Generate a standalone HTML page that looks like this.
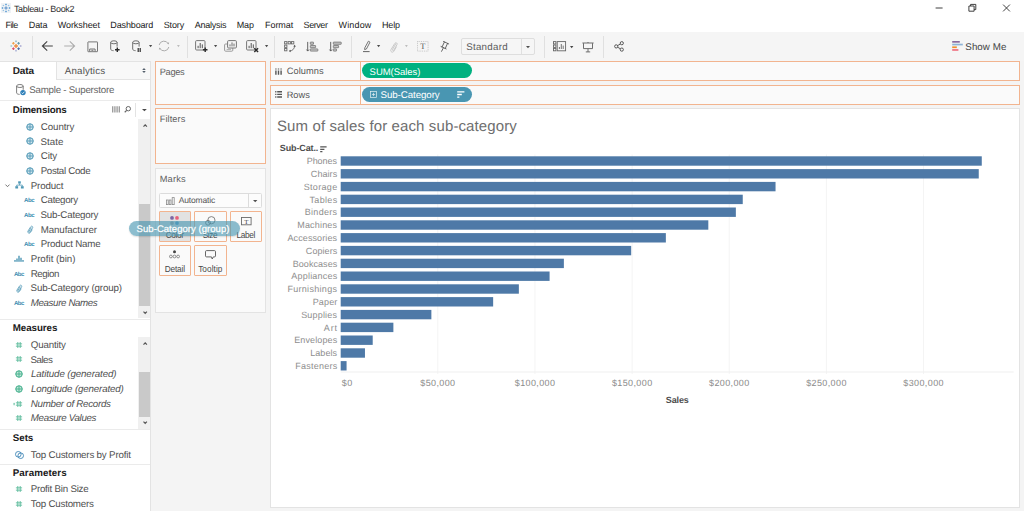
<!DOCTYPE html>
<html lang="en">
<head>
<meta charset="utf-8">
<title>Tableau - Book2</title>
<meta name="viewport" content="width=1024, initial-scale=1">
<style>
html,body{margin:0;padding:0}
body{width:1024px;height:511px;overflow:hidden;background:#fff;font-family:"Liberation Sans", sans-serif;font-size:9px;line-height:12px;color:#333;text-rendering:geometricPrecision}
#app,#app div,#app section,#app aside,#app header,#app nav,#app main,#app ul,#app li,#app button{position:absolute;box-sizing:border-box;margin:0;padding:0;list-style:none}
#app{overflow:hidden;background:#fff}
button{font:inherit;color:inherit;appearance:none;-webkit-appearance:none}
.t{position:absolute;white-space:nowrap;line-height:12px}
.ic{position:absolute;overflow:visible}
.pill{border-radius:8px}
.gt{-webkit-text-stroke:0.3px rgba(255,255,255,.85)}
</style>
</head>
<body>
<div id="app" style="left:0px;top:0px;width:1024px;height:511px;">
 <header id="titlebar" style="left:0px;top:0px;width:1024px;height:17px;">
  <svg class="ic" style="left:1px;top:3px" width="10" height="10" viewBox="0 0 10 10" ><rect width="10" height="10" fill="#f0f3f6"/><g stroke="#4a86c5" stroke-width="0.9" fill="none"><path d="M5 3.3v3.4M3.3 5h3.4"/><path d="M5 0.6v1.8M4.1 1.5h1.8M5 7.6v1.8M4.1 8.5h1.8M1.5 4.1v1.8M0.6 5h1.8M8.5 4.1v1.8M7.6 5h1.8" stroke="#6aa5d6"/><path d="M2.4 1.8v1.4M1.7 2.5h1.4M7.6 1.8v1.4M6.9 2.5h1.4M2.4 6.8v1.4M1.7 7.5h1.4M7.6 6.8v1.4M6.9 7.5h1.4" stroke="#8bbbe0" stroke-width="0.7"/></g></svg>
  <span class="t" style="left:13.94px;top:3px;color:#2e2e2e;letter-spacing:-0.32px">Tableau - Book2</span>
  <svg class="ic" style="left:932px;top:0px" width="84" height="17" viewBox="0 0 84 17" ><g fill="none" stroke="#2b2b2b" stroke-width="0.9"><path d="M3.6 8h7"/><path d="M36.9 6h5.2v5.2h-5.2zM38.6 6v-1.6h5.2v5.2h-1.7"/><path d="M71.1 4.6l6.8 6.8M77.9 4.6l-6.8 6.8"/></g></svg>
 </header>
 <nav id="menubar" style="left:0px;top:17px;width:1024px;height:15px;">
  <span class="t" style="left:5.49px;top:2px;color:#1a1a1a;letter-spacing:-0.57px">File</span>
  <span class="t" style="left:28.82px;top:2px;color:#1a1a1a;letter-spacing:-0.1px">Data</span>
  <span class="t" style="left:57.69px;top:2px;color:#1a1a1a;letter-spacing:-0.06px">Worksheet</span>
  <span class="t" style="left:110.32px;top:2px;color:#1a1a1a;letter-spacing:-0.14px">Dashboard</span>
  <span class="t" style="left:163.75px;top:2px;color:#1a1a1a;letter-spacing:-0.13px">Story</span>
  <span class="t" style="left:194.79px;top:2px;color:#1a1a1a;letter-spacing:-0.27px">Analysis</span>
  <span class="t" style="left:236.72px;top:2px;color:#1a1a1a;letter-spacing:-0.1px">Map</span>
  <span class="t" style="left:265.09px;top:2px;color:#1a1a1a;letter-spacing:-0.08px">Format</span>
  <span class="t" style="left:303.55px;top:2px;color:#1a1a1a;letter-spacing:-0.42px">Server</span>
  <span class="t" style="left:338.49px;top:2px;color:#1a1a1a;letter-spacing:0.16px">Window</span>
  <span class="t" style="left:381.89px;top:2px;color:#1a1a1a;letter-spacing:-0.12px">Help</span>
 </nav>
 <div id="toolbar" style="left:0px;top:32px;width:1024px;height:29px;background:#f5f5f5">
  <div style="left:32.3px;top:3.5px;width:1px;height:22px;background:#e0e0e0">
  </div>
  <div style="left:187px;top:3.5px;width:1px;height:22px;background:#e0e0e0">
  </div>
  <div style="left:274.3px;top:3.5px;width:1px;height:22px;background:#e0e0e0">
  </div>
  <div style="left:351px;top:3.5px;width:1px;height:22px;background:#e0e0e0">
  </div>
  <div style="left:544.1px;top:3.5px;width:1px;height:22px;background:#e0e0e0">
  </div>
  <div style="left:603px;top:3.5px;width:1px;height:22px;background:#e0e0e0">
  </div>
  <svg class="ic" style="left:10px;top:8.2px" width="12" height="12" viewBox="0 0 12 12" ><g fill="none"><path d="M6 4.1v3.8M4.1 6h3.8" stroke="#ee8a3c" stroke-width="1.3"/><path d="M3.4 2v2.6M2.1 3.3h2.6" stroke="#f0a04b" stroke-width="1"/><path d="M8.6 2v2.6M7.3 3.3h2.6" stroke="#5f97ab" stroke-width="1"/><path d="M3.4 7.4v2.6M2.1 8.7h2.6" stroke="#d9486a" stroke-width="1"/><path d="M8.6 7.4v2.6M7.3 8.7h2.6" stroke="#4a6aa5" stroke-width="1"/><path d="M6 0.4v1.8M5.1 1.3h1.8" stroke="#86b9c6" stroke-width="0.8"/><path d="M6 9.8v1.8M5.1 10.7h1.8" stroke="#a7aed6" stroke-width="0.8"/><path d="M1.3 5.1v1.8M0.4 6h1.8" stroke="#9cc8d2" stroke-width="0.8"/><path d="M10.7 5.1v1.8M9.8 6h1.8" stroke="#a3a4d2" stroke-width="0.8"/></g></svg>
  <svg class="ic" style="left:41px;top:8.3px" width="13" height="12" viewBox="0 0 13 12" ><path d="M6.2 1.3L1.4 6l4.8 4.7M1.6 6h10.2" fill="none" stroke="#444" stroke-width="1.15"/></svg>
  <svg class="ic" style="left:63.3px;top:8.3px" width="13" height="12" viewBox="0 0 13 12" ><path d="M6.8 1.3L11.6 6l-4.8 4.7M11.4 6H1.2" fill="none" stroke="#adadad" stroke-width="1.1"/></svg>
  <svg class="ic" style="left:86.5px;top:8.5px" width="11" height="11" viewBox="0 0 11 11" ><g fill="none" stroke="#777" stroke-width="1"><rect x="0.9" y="0.9" width="9.6" height="9.8" rx="0.3"/></g><path d="M2.7 10.3V8h5.4v2.3" fill="none" stroke="#666" stroke-width="0.9"/><path d="M4.4 9.3h2" stroke="#666" stroke-width="0.9"/></svg>
  <svg class="ic" style="left:109.6px;top:8.3px" width="12" height="13" viewBox="0 0 12 13" ><g fill="none" stroke="#6e6e6e" stroke-width="1"><ellipse cx="3.9" cy="2.3" rx="3.2" ry="1.5"/><path d="M0.7 2.3v6.9c0 .800 1.3 1.4 2.9 1.5"/><path d="M7.1 2.3v4.3"/></g><path d="M7.3 7.4v4.6M5 9.7h4.6" stroke="#2b2b2b" stroke-width="1.4" fill="none"/></svg>
  <svg class="ic" style="left:131.8px;top:8.3px" width="12" height="13" viewBox="0 0 12 13" ><g fill="none" stroke="#6e6e6e" stroke-width="1"><ellipse cx="3.9" cy="2.3" rx="3.2" ry="1.5"/><path d="M0.7 2.3v6.9c0 .800 1.3 1.4 2.9 1.5"/><path d="M7.1 2.3v4.3"/></g><path d="M6.2 8v4M8.2 8v4" stroke="#2b2b2b" stroke-width="1.2" fill="none"/></svg>
  <svg class="ic" style="left:149.1px;top:13.4px" width="3.2" height="2.2" viewBox="0 0 3.2 2.2" ><path d="M0 0h3.2l-1.6 2.2z" fill="#4a4a4a"/></svg>
  <svg class="ic" style="left:158.3px;top:8.3px" width="12" height="12" viewBox="0 0 12 12" ><g fill="none" stroke="#adadad" stroke-width="1"><path d="M1.15 5A4.9 4.9 0 0 1 10.3 3.8M10.85 7A4.9 4.9 0 0 1 1.7 8.2"/></g><path d="M9 3.2l1.9 1.4.2-2.3zM3 8.8L1.1 7.4l-.2 2.3z" fill="#adadad"/></svg>
  <svg class="ic" style="left:176.8px;top:13.4px" width="2.8" height="2.2" viewBox="0 0 2.8 2.2" ><path d="M0 0h2.8l-1.4 2.2z" fill="#bdbdbd"/></svg>
  <svg class="ic" style="left:194.5px;top:8.2px" width="14" height="13" viewBox="0 0 14 13" ><g transform="translate(0 0)" fill="none"><rect x="0.6" y="0.6" width="9.4" height="9.4" rx="1" stroke="#777" stroke-width="1"/><path d="M3.1 8.2V5.8M5.2 8.2V3M7.3 8.2V4.4" stroke="#555" stroke-width="1"/></g><path d="M10.2 7.4v4.6M7.9 9.7h4.6" stroke="#2b2b2b" stroke-width="1.4" fill="none"/></svg>
  <svg class="ic" style="left:214.4px;top:13.4px" width="3.2" height="2.2" viewBox="0 0 3.2 2.2" ><path d="M0 0h3.2l-1.6 2.2z" fill="#4a4a4a"/></svg>
  <svg class="ic" style="left:223.8px;top:8px" width="14" height="13" viewBox="0 0 14 13" ><g fill="none" stroke="#9a9a9a" stroke-width="1"><rect x="0.6" y="4" width="8.2" height="7.2" rx="1"/><path d="M2.6 9.4h4.4" stroke-width="0.8"/></g><rect x="3.6" y="0.6" width="8.8" height="7.4" rx="1" fill="#f5f5f5" stroke="#777" stroke-width="1"/><path d="M6 6.4V4.4M8 6.4V2.4M10 6.4V3.6" stroke="#606060" stroke-width="0.9" fill="none"/></svg>
  <svg class="ic" style="left:245.5px;top:8.2px" width="14" height="13" viewBox="0 0 14 13" ><g transform="translate(0 0)" fill="none"><rect x="0.6" y="0.6" width="9.4" height="9.4" rx="1" stroke="#777" stroke-width="1"/><path d="M3.1 8.2V5.8M5.2 8.2V3M7.3 8.2V4.4" stroke="#555" stroke-width="1"/></g><path d="M8.3 8.2l3.8 3.8M12.1 8.2l-3.8 3.8" stroke="#2b2b2b" stroke-width="1.4" fill="none"/></svg>
  <svg class="ic" style="left:265px;top:13.4px" width="3.2" height="2.2" viewBox="0 0 3.2 2.2" ><path d="M0 0h3.2l-1.6 2.2z" fill="#4a4a4a"/></svg>
  <svg class="ic" style="left:283.5px;top:8.5px" width="13" height="12" viewBox="0 0 13 12" ><g fill="none" stroke="#6a6a6a" stroke-width="0.9"><rect x="0.6" y="0.6" width="2.3" height="2.3"/><rect x="4.1" y="0.6" width="2.3" height="2.3"/><rect x="7.5" y="0.6" width="2.3" height="2.3"/><rect x="0.6" y="4.1" width="2.3" height="2.3"/><rect x="0.6" y="7.5" width="2.3" height="2.3"/><path d="M10.6 5c-.200 2.9-2 4.7-4.9 5"/></g><path d="M9.3 5.6l1.4-1.8 1.2 1.9zM6.6 8.7L4.8 10l1.9 1.3z" fill="#555"/></svg>
  <svg class="ic" style="left:306.1px;top:8.5px" width="13" height="12" viewBox="0 0 13 12" ><path d="M1.7 0.9v9M0.5 8.6l1.2 1.5 1.2-1.5" fill="none" stroke="#555" stroke-width="0.9"/><rect x="4.3" y="1.1" width="3.2" height="2.2" rx="0.3" fill="#c4c4c4" stroke="#747474" stroke-width="0.8"/><rect x="4.3" y="4.5" width="5.3" height="2.2" rx="0.3" fill="#c4c4c4" stroke="#747474" stroke-width="0.8"/><rect x="4.3" y="7.9" width="7.5" height="2.2" rx="0.3" fill="#c4c4c4" stroke="#747474" stroke-width="0.8"/></svg>
  <svg class="ic" style="left:328.7px;top:8.5px" width="13" height="12" viewBox="0 0 13 12" ><path d="M1.7 0.9v9M0.5 8.6l1.2 1.5 1.2-1.5" fill="none" stroke="#555" stroke-width="0.9"/><rect x="4.3" y="1.1" width="7.9" height="2.2" rx="0.3" fill="#c4c4c4" stroke="#747474" stroke-width="0.8"/><rect x="4.3" y="4.5" width="5.3" height="2.2" rx="0.3" fill="#c4c4c4" stroke="#747474" stroke-width="0.8"/><rect x="4.3" y="7.9" width="3.2" height="2.2" rx="0.3" fill="#c4c4c4" stroke="#747474" stroke-width="0.8"/></svg>
  <svg class="ic" style="left:361.5px;top:8px" width="10" height="13" viewBox="0 0 10 13" ><g fill="none" stroke="#666" stroke-width="0.9"><path d="M6.4 1.2l1.6 1L4.4 9 2.6 9.6l.200-1.8z"/><path d="M1 11.6h6.6" stroke="#555"/></g></svg>
  <svg class="ic" style="left:376.8px;top:13.4px" width="3.2" height="2.2" viewBox="0 0 3.2 2.2" ><path d="M0 0h3.2l-1.6 2.2z" fill="#4a4a4a"/></svg>
  <svg class="ic" style="left:388.7px;top:8.6px" width="10" height="12" viewBox="0 0 10 12" ><g fill="none" stroke="#c4c4c4" stroke-width="0.9" stroke-linecap="round"><path d="M6.9 2.6L3.5 8.4c-.500.9.800 1.6 1.3.800L8 3.6c.800-1.5-1.2-2.7-2.2-1.2L2 8.6c-1.1 2 1.6 3.6 2.8 1.7L7.3 6"/></g></svg>
  <svg class="ic" style="left:405.1px;top:13.4px" width="2.8" height="2.2" viewBox="0 0 2.8 2.2" ><path d="M0 0h2.8l-1.4 2.2z" fill="#bdbdbd"/></svg>
  <svg class="ic" style="left:416.8px;top:8.6px" width="12" height="11" viewBox="0 0 12 11" ><rect x="0.5" y="0.5" width="10.6" height="9.6" fill="none" stroke="#b0b0b0" stroke-width="0.7" stroke-dasharray="0.9 0.9"/><text x="5.8" y="8.3" font-family="Liberation Serif, serif" font-size="8.5" fill="#5a5a5a" text-anchor="middle">T</text></svg>
  <svg class="ic" style="left:440px;top:8px" width="10" height="12" viewBox="0 0 10 12" ><g fill="none" stroke="#555" stroke-width="0.9" stroke-linecap="round"><path d="M3.5 1.5L8.7 3.9"/><path d="M4.4 2L2.1 6.9"/><path d="M7.5 3.5L5.3 8.4"/><path d="M1 6.5L6.1 8.9"/><path d="M3.4 7.8L1.6 11.3"/></g></svg>
  <div style="left:461px;top:6px;width:74px;height:17px;border:1px solid #dedede;border-radius:2px;background:#f6f6f6">
   <div style="left:59px;top:0px;width:1px;height:15px;background:#e0e0e0">
   </div>
   <span class="t" style="left:4.24px;top:3px;font-size:9.75px;color:#5c5c5c;letter-spacing:0.25px">Standard</span>
   <svg class="ic" style="left:64.2px;top:6.8px" width="4" height="2.2" viewBox="0 0 4 2.2" ><path d="M0 0h4l-2 2.2z" fill="#505050"/></svg>
  </div>
  <svg class="ic" style="left:552.8px;top:8.5px" width="14" height="11" viewBox="0 0 14 11" ><g fill="none" stroke="#666" stroke-width="0.9"><rect x="0.5" y="0.6" width="2.4" height="2.4"/><rect x="0.5" y="4" width="2.4" height="2.4"/><rect x="0.5" y="7.4" width="2.4" height="2.4"/><rect x="4.2" y="0.6" width="8.4" height="9.2"/><path d="M6.4 8V6M8.3 8V3M10.2 8V4.6"/></g></svg>
  <svg class="ic" style="left:570.3px;top:13.6px" width="3.4" height="2.2" viewBox="0 0 3.4 2.2" ><path d="M0 0h3.4l-1.7 2.2z" fill="#444"/></svg>
  <svg class="ic" style="left:581.6px;top:9.6px" width="12" height="12" viewBox="0 0 12 12" ><g fill="none" stroke="#5e5e5e" stroke-width="0.9"><path d="M0.4 1h11.2"/><path d="M1.5 1.2v5.4h9V1.2"/><path d="M6 6.8v3M3.8 9.9h4.4M6 0v1"/></g></svg>
  <svg class="ic" style="left:613.5px;top:8.6px" width="11" height="11" viewBox="0 0 11 11" ><g fill="none" stroke="#4a4a4a" stroke-width="0.9"><circle cx="2.2" cy="5.4" r="1.6"/><circle cx="7.8" cy="2.2" r="1.6"/><circle cx="7.8" cy="8.6" r="1.6"/><path d="M3.6 4.6l2.8-1.6M3.6 6.2l2.8 1.6"/></g></svg>
  <svg class="ic" style="left:952px;top:9px" width="12" height="10" viewBox="0 0 12 10" ><rect x="0.2" y="0" width="7.6" height="1.7" fill="#8a6aa0"/><rect x="0.2" y="2.7" width="10.6" height="1.7" fill="#8fb4d6"/><rect x="0.2" y="5.4" width="4.6" height="1.7" fill="#f28e2b"/><rect x="0.2" y="8.1" width="6.2" height="1.7" fill="#ef6f7f"/></svg>
  <span class="t" style="left:965.34px;top:10px;font-size:9.75px;color:#444;letter-spacing:0.06px">Show Me</span>
 </div>
 <main id="workspace" style="left:0px;top:61px;width:1024px;height:450px;background:#f4f4f4">
  <aside id="datapane" style="left:0px;top:0px;width:150.5px;height:450px;background:#fff;border-top:1px solid #e3e3e3;border-right:1px solid #e3e3e3">
   <div class="tab" style="left:55.6px;top:0px;width:94.9px;height:17.8px;background:#f8f8f8;border-left:1px solid #e3e3e3;border-bottom:1px solid #e3e3e3">
   </div>
   <span class="t" style="left:12.79px;top:4px;font-size:10px;color:#222;font-weight:700;letter-spacing:-0.13px">Data</span>
   <span class="t" style="left:64.83px;top:4px;font-size:9.75px;color:#505050;letter-spacing:0.15px">Analytics</span>
   <svg class="ic" style="left:141.5px;top:5.6px" width="4" height="5" viewBox="0 0 4 5" ><path d="M2 0l1.8 2h-3.6zM2 5l1.8-2h-3.6z" fill="#55606c"/></svg>
   <svg class="ic" style="left:15.8px;top:22.2px" width="11" height="12" viewBox="0 0 11 12" ><g fill="none" stroke="#707070" stroke-width="0.9"><ellipse cx="3.9" cy="2" rx="3.3" ry="1.5"/><path d="M0.6 2v6.9c0 .800 1.3 1.4 3 1.5M7.2 2v3.8"/></g><circle cx="7" cy="8.6" r="2.7" fill="#2e7fb8"/><path d="M5.7 8.7l1 1 1.7-2" fill="none" stroke="#fff" stroke-width="0.8"/></svg>
   <span class="t" style="left:29.24px;top:23px;font-size:9.75px;color:#666;letter-spacing:-0.24px">Sample - Superstore</span>
   <div style="left:0px;top:38.1px;width:150px;height:1px;background:#ebebeb">
   </div>
   <span class="t" style="left:12.79px;top:43px;font-size:9.75px;color:#1a1a1a;font-weight:700;letter-spacing:-0.14px">Dimensions</span>
   <svg class="ic" style="left:112px;top:43.8px" width="9" height="8" viewBox="0 0 9 8" ><path d="M0.7 0.2v6.4M2.9 0.2v6.4M5.1 0.2v6.4M7.3 0.2v6.4" stroke="#9b9b9b" stroke-width="1.35" fill="none"/></svg>
   <svg class="ic" style="left:124.4px;top:44.2px" width="7" height="7" viewBox="0 0 7 7" ><g fill="none" stroke="#666" stroke-width="1"><circle cx="4.3" cy="2.7" r="2.2"/><path d="M2.7 4.4L0.7 6.3" stroke-width="1.2"/></g></svg>
   <div style="left:135px;top:41px;width:1px;height:13.5px;background:#e3e3e3">
   </div>
   <svg class="ic" style="left:141.6px;top:46.5px" width="4.8" height="2.2" viewBox="0 0 4.8 2.2" ><path d="M0 0h4.8l-2.4 2.2z" fill="#4a4a4a"/></svg>
   <div class="sb" style="left:138px;top:57px;width:12px;height:199px;background:#f0f0f0">
    <div style="left:1px;top:85px;width:11px;height:102px;background:#c9c9c9">
    </div>
    <svg class="ic" style="left:4.7px;top:4.8px" width="4.4" height="3.4" viewBox="0 0 4.4 3.4" ><path d="M0.5 2.7L2.2 0.9l1.7 1.8" fill="none" stroke="#555" stroke-width="1.2"/></svg>
    <svg class="ic" style="left:4.7px;top:192px" width="4.4" height="3.4" viewBox="0 0 4.4 3.4" ><path d="M0.5 0.7L2.2 2.5l1.7-1.8" fill="none" stroke="#555" stroke-width="1.2"/></svg>
   </div>
   <div class="sb" style="left:138px;top:275px;width:12px;height:92px;background:#f0f0f0">
    <div style="left:1px;top:35px;width:11px;height:44.5px;background:#c9c9c9">
    </div>
    <svg class="ic" style="left:4.7px;top:5px" width="4.4" height="3.4" viewBox="0 0 4.4 3.4" ><path d="M0.5 2.7L2.2 0.9l1.7 1.8" fill="none" stroke="#555" stroke-width="1.2"/></svg>
    <svg class="ic" style="left:4.7px;top:84px" width="4.4" height="3.4" viewBox="0 0 4.4 3.4" ><path d="M0.5 0.7L2.2 2.5l1.7-1.8" fill="none" stroke="#555" stroke-width="1.2"/></svg>
   </div>
   <ul id="dimensions" style="left:0px;top:57px;width:139px;height:200px;">
    <li style="left:0px;top:0.16px;width:139px;height:14.68px;">
     <svg class="ic" style="left:25.5px;top:3.64px" width="8" height="8" viewBox="0 0 8 8" ><circle cx="4" cy="4" r="3.25" fill="#d3e6ee" stroke="#4e97b5" stroke-width="1"/><path d="M4 0.8v6.4M0.8 4h6.4" fill="none" stroke="#4e97b5" stroke-width="0.85"/></svg>
     <span class="t" style="left:40.87px;top:2.84px;font-size:9.75px;color:#505050;letter-spacing:-0.11px">Country</span>
    </li>
    <li style="left:0px;top:14.84px;width:139px;height:14.68px;">
     <svg class="ic" style="left:25.5px;top:3.64px" width="8" height="8" viewBox="0 0 8 8" ><circle cx="4" cy="4" r="3.25" fill="#d3e6ee" stroke="#4e97b5" stroke-width="1"/><path d="M4 0.8v6.4M0.8 4h6.4" fill="none" stroke="#4e97b5" stroke-width="0.85"/></svg>
     <span class="t" style="left:40.54px;top:3.16px;font-size:9.75px;color:#505050;letter-spacing:0.01px">State</span>
    </li>
    <li style="left:0px;top:29.52px;width:139px;height:14.68px;">
     <svg class="ic" style="left:25.5px;top:3.64px" width="8" height="8" viewBox="0 0 8 8" ><circle cx="4" cy="4" r="3.25" fill="#d3e6ee" stroke="#4e97b5" stroke-width="1"/><path d="M4 0.8v6.4M0.8 4h6.4" fill="none" stroke="#4e97b5" stroke-width="0.85"/></svg>
     <span class="t" style="left:40.87px;top:2.48px;font-size:9.75px;color:#505050;letter-spacing:-0.2px">City</span>
    </li>
    <li style="left:0px;top:44.2px;width:139px;height:14.68px;">
     <svg class="ic" style="left:25.5px;top:3.64px" width="8" height="8" viewBox="0 0 8 8" ><circle cx="4" cy="4" r="3.25" fill="#d3e6ee" stroke="#4e97b5" stroke-width="1"/><path d="M4 0.8v6.4M0.8 4h6.4" fill="none" stroke="#4e97b5" stroke-width="0.85"/></svg>
     <span class="t" style="left:40.65px;top:2.8px;font-size:9.75px;color:#505050;letter-spacing:-0.32px">Postal Code</span>
    </li>
    <li style="left:0px;top:58.88px;width:139px;height:14.68px;">
     <svg class="ic" style="left:14.8px;top:3.54px" width="9" height="8" viewBox="0 0 9 8" ><g fill="#4e97b5"><rect x="3.2" y="0.3" width="2.6" height="2.3"/><rect x="0.3" y="5.2" width="2.8" height="2.3"/><rect x="5.9" y="5.2" width="2.8" height="2.3"/></g><path d="M4.5 2.6v1.5M1.7 5.2V4.1h5.6v1.1" fill="none" stroke="#4e97b5" stroke-width="0.8"/></svg>
     <span class="t" style="left:30.65px;top:3.12px;font-size:9.75px;color:#505050;letter-spacing:-0.13px">Product</span>
     <svg class="ic" style="left:5px;top:5.84px" width="5" height="3.4" viewBox="0 0 5 3.4" ><path d="M0.5 0.6L2.5 2.7l2-2.1" fill="none" stroke="#666" stroke-width="0.9"/></svg>
    </li>
    <li style="left:0px;top:73.56px;width:139px;height:14.68px;">
     <span class="t ico" style="left:24.09px;top:2.44px;font-size:6px;color:#3d8db1;font-weight:700;letter-spacing:-0.41px">Abc</span>
     <span class="t" style="left:40.87px;top:2.44px;font-size:9.75px;color:#505050;letter-spacing:-0.34px">Category</span>
    </li>
    <li style="left:0px;top:88.24px;width:139px;height:14.68px;">
     <span class="t ico" style="left:24.09px;top:2.76px;font-size:6px;color:#3d8db1;font-weight:700;letter-spacing:-0.41px">Abc</span>
     <span class="t" style="left:40.54px;top:2.76px;font-size:9.75px;color:#505050;letter-spacing:-0.2px">Sub-Category</span>
    </li>
    <li style="left:0px;top:102.92px;width:139px;height:14.68px;">
     <svg class="ic" style="left:25.5px;top:3.04px" width="8" height="9" viewBox="0 0 8 9" ><path d="M5.3 2.6L2.9 6.4c-.400.7.600 1.3 1 .600L6.6 2.8c.700-1.2-1.1-2.3-1.9-1L2 6c-1 1.7 1.4 3.1 2.4 1.5L6.3 4.6" fill="none" stroke="#4e97b5" stroke-width="0.8"/></svg>
     <span class="t" style="left:40.65px;top:3.08px;font-size:9.75px;color:#505050;letter-spacing:-0.1px">Manufacturer</span>
    </li>
    <li style="left:0px;top:117.6px;width:139px;height:14.68px;">
     <span class="t ico" style="left:24.09px;top:2.4px;font-size:6px;color:#3d8db1;font-weight:700;letter-spacing:-0.41px">Abc</span>
     <span class="t" style="left:40.65px;top:2.4px;font-size:9.75px;color:#505050;letter-spacing:-0.21px">Product Name</span>
    </li>
    <li style="left:0px;top:132.28px;width:139px;height:14.68px;">
     <svg class="ic" style="left:14.3px;top:4.14px" width="10" height="7" viewBox="0 0 10 7" ><path d="M1 6.5v-1.5M3 6.5V3.6M5 6.5V0.8M7 6.5V2.8M9 6.5v-1.5" stroke="#4e97b5" stroke-width="1.4" fill="none"/><path d="M0 6.6h10" stroke="#4e97b5" stroke-width="0.5" opacity="0.7"/></svg>
     <span class="t" style="left:30.65px;top:2.72px;font-size:9.75px;color:#505050;letter-spacing:-0.01px">Profit (bin)</span>
    </li>
    <li style="left:0px;top:146.96px;width:139px;height:14.68px;">
     <span class="t ico" style="left:13.89px;top:3.04px;font-size:6px;color:#3d8db1;font-weight:700;letter-spacing:-0.41px">Abc</span>
     <span class="t" style="left:30.65px;top:3.04px;font-size:9.75px;color:#505050;letter-spacing:-0.41px">Region</span>
    </li>
    <li style="left:0px;top:161.64px;width:139px;height:14.68px;">
     <svg class="ic" style="left:15.3px;top:3.04px" width="8" height="9" viewBox="0 0 8 9" ><path d="M5.3 2.6L2.9 6.4c-.400.7.600 1.3 1 .600L6.6 2.8c.700-1.2-1.1-2.3-1.9-1L2 6c-1 1.7 1.4 3.1 2.4 1.5L6.3 4.6" fill="none" stroke="#4e97b5" stroke-width="0.8"/></svg>
     <span class="t" style="left:30.54px;top:2.36px;font-size:9.75px;color:#505050;letter-spacing:-0.15px">Sub-Category (group)</span>
    </li>
    <li style="left:0px;top:176.32px;width:139px;height:14.68px;">
     <span class="t ico" style="left:13.89px;top:2.68px;font-size:6px;color:#3d8db1;font-weight:700;letter-spacing:-0.41px">Abc</span>
     <span class="t" style="left:30.79px;top:2.68px;font-size:9.75px;color:#505050;font-style:italic;letter-spacing:-0.38px">Measure Names</span>
    </li>
   </ul>
   <div style="left:0px;top:256.9px;width:150px;height:1px;background:#ebebeb">
   </div>
   <span class="t" style="left:12.79px;top:261px;font-size:9.75px;color:#1a1a1a;font-weight:700;letter-spacing:-0.06px">Measures</span>
   <ul id="measures" style="left:0px;top:275px;width:139px;height:92px;">
    <li style="left:0px;top:0.26px;width:139px;height:14.68px;">
     <svg class="ic" style="left:15.3px;top:3.54px" width="8" height="8" viewBox="0 0 8 8" ><path d="M2.8 1v6M5.2 1v6M0.9 2.85h6.2M0.9 5.15h6.2" stroke="#52b795" stroke-width="0.85" fill="none"/></svg>
     <span class="t" style="left:30.87px;top:2.74px;font-size:9.75px;color:#505050;letter-spacing:-0.2px">Quantity</span>
    </li>
    <li style="left:0px;top:14.94px;width:139px;height:14.68px;">
     <svg class="ic" style="left:15.3px;top:3.54px" width="8" height="8" viewBox="0 0 8 8" ><path d="M2.8 1v6M5.2 1v6M0.9 2.85h6.2M0.9 5.15h6.2" stroke="#52b795" stroke-width="0.85" fill="none"/></svg>
     <span class="t" style="left:30.54px;top:3.06px;font-size:9.75px;color:#505050;letter-spacing:-0.5px">Sales</span>
    </li>
    <li style="left:0px;top:29.62px;width:139px;height:14.68px;">
     <svg class="ic" style="left:15.3px;top:3.64px" width="8" height="8" viewBox="0 0 8 8" ><circle cx="4" cy="4" r="3.25" fill="#bfe5d8" stroke="#3fae8a" stroke-width="1"/><path d="M4 0.8v6.4M0.8 4h6.4" fill="none" stroke="#3fae8a" stroke-width="0.85"/></svg>
     <span class="t" style="left:30.97px;top:2.38px;font-size:9.75px;color:#505050;font-style:italic;letter-spacing:-0.12px">Latitude (generated)</span>
    </li>
    <li style="left:0px;top:44.3px;width:139px;height:14.68px;">
     <svg class="ic" style="left:15.3px;top:3.64px" width="8" height="8" viewBox="0 0 8 8" ><circle cx="4" cy="4" r="3.25" fill="#bfe5d8" stroke="#3fae8a" stroke-width="1"/><path d="M4 0.8v6.4M0.8 4h6.4" fill="none" stroke="#3fae8a" stroke-width="0.85"/></svg>
     <span class="t" style="left:30.97px;top:2.7px;font-size:9.75px;color:#505050;font-style:italic;letter-spacing:-0.16px">Longitude (generated)</span>
    </li>
    <li style="left:0px;top:58.98px;width:139px;height:14.68px;">
     <svg class="ic" style="left:13.3px;top:3.54px" width="10" height="8" viewBox="0 0 10 8" ><path d="M4.8 1v6M7.2 1v6M2.9 2.85h6.2M2.9 5.15h6.2" stroke="#52b795" stroke-width="0.85" fill="none"/><path d="M0.3 3.4h1.7M0.3 4.7h1.7" stroke="#52b795" stroke-width="0.7"/></svg>
     <span class="t" style="left:30.79px;top:3.02px;font-size:9.75px;color:#505050;font-style:italic;letter-spacing:-0.27px">Number of Records</span>
    </li>
    <li style="left:0px;top:73.66px;width:139px;height:14.68px;">
     <svg class="ic" style="left:15.3px;top:3.54px" width="8" height="8" viewBox="0 0 8 8" ><path d="M2.8 1v6M5.2 1v6M0.9 2.85h6.2M0.9 5.15h6.2" stroke="#52b795" stroke-width="0.85" fill="none"/></svg>
     <span class="t" style="left:30.79px;top:2.34px;font-size:9.75px;color:#505050;font-style:italic;letter-spacing:-0.34px">Measure Values</span>
    </li>
   </ul>
   <div style="left:0px;top:366.8px;width:150px;height:1px;background:#ebebeb">
   </div>
   <span class="t" style="left:12.87px;top:371px;font-size:9.75px;color:#1a1a1a;font-weight:700;letter-spacing:-0.08px">Sets</span>
   <svg class="ic" style="left:14.8px;top:388.7px" width="9" height="8" viewBox="0 0 9 8" ><g fill="none" stroke="#3f86b5" stroke-width="0.9"><circle cx="3.3" cy="3.3" r="2.8"/><circle cx="5.7" cy="4.7" r="2.8"/></g></svg>
   <span class="t" style="left:30.87px;top:388px;font-size:9.75px;color:#505050;letter-spacing:-0.18px">Top Customers by Profit</span>
   <div style="left:0px;top:401.8px;width:150px;height:1px;background:#ebebeb">
   </div>
   <span class="t" style="left:12.79px;top:406px;font-size:9.75px;color:#1a1a1a;font-weight:700;letter-spacing:0.08px">Parameters</span>
   <svg class="ic" style="left:15.3px;top:423.2px" width="8" height="8" viewBox="0 0 8 8" ><path d="M2.8 1v6M5.2 1v6M0.9 2.85h6.2M0.9 5.15h6.2" stroke="#52b795" stroke-width="0.85" fill="none"/></svg>
   <span class="t" style="left:30.65px;top:422px;font-size:9.75px;color:#505050;letter-spacing:-0.23px">Profit Bin Size</span>
   <svg class="ic" style="left:15.3px;top:438px" width="8" height="8" viewBox="0 0 8 8" ><path d="M2.8 1v6M5.2 1v6M0.9 2.85h6.2M0.9 5.15h6.2" stroke="#52b795" stroke-width="0.85" fill="none"/></svg>
   <span class="t" style="left:30.87px;top:437px;font-size:9.75px;color:#505050;letter-spacing:-0.21px">Top Customers</span>
  </aside>
  <section id="pages" class="card" style="left:154.5px;top:0px;width:111.7px;height:44px;border:1px solid #f2b48f;background:#fafafa">
   <span class="t" style="left:4.19px;top:4px;font-size:9.25px;color:#606060;letter-spacing:-0.3px">Pages</span>
  </section>
  <section id="filters" class="card" style="left:154.5px;top:47px;width:111.7px;height:56.1px;border:1px solid #f2b48f;background:#fafafa">
   <span class="t" style="left:4.19px;top:4px;font-size:9.25px;color:#606060;letter-spacing:0.08px">Filters</span>
  </section>
  <section id="marks" class="card" style="left:154.5px;top:106.6px;width:111.7px;height:145.3px;border:1px solid #e3e3e3;background:#fafafa">
   <span class="t" style="left:4.19px;top:4.4px;font-size:9.25px;color:#606060;letter-spacing:0.17px">Marks</span>
   <div style="left:3.5px;top:24.4px;width:103px;height:15px;border:1px solid #dcdcdc;border-radius:1.5px;background:#fcfcfc">
    <div style="left:88px;top:0px;width:1px;height:13px;background:#dcdcdc">
    </div>
    <svg class="ic" style="left:5.7px;top:2.6px" width="9" height="8" viewBox="0 0 9 8" ><g fill="none" stroke="#8a8a8a" stroke-width="0.8"><rect x="0.4" y="3" width="1.8" height="4.6"/><rect x="3.2" y="3" width="1.8" height="4.6"/><rect x="6.2" y="0.6" width="2" height="7"/></g></svg>
    <span class="t" style="left:18.76px;top:0px;font-size:8.5px;color:#555;letter-spacing:-0.16px">Automatic</span>
    <svg class="ic" style="left:92.8px;top:5.6px" width="4.4" height="2.2" viewBox="0 0 4.4 2.2" ><path d="M0 0h4.4l-2.2 2.2z" fill="#505050"/></svg>
   </div>
   <button class="mbtn" style="left:3.5px;top:42.4px;width:32px;height:31px;border:1px solid #f2b48f;border-radius:1px;background:#e2e2e2">
    <svg class="ic" style="left:10.3px;top:4.2px" width="9" height="9" viewBox="0 0 9 9" ><circle cx="2" cy="1.9" r="1.9" fill="#7b66a3"/><circle cx="7" cy="1.9" r="1.9" fill="#e8627a"/><circle cx="2" cy="7.1" r="1.9" fill="#a5a5a5"/><circle cx="7" cy="7.1" r="1.9" fill="#5c9dc9"/></svg>
    <span class="t" style="left:5.74px;top:18px;font-size:8.25px;color:#484848;letter-spacing:-0.36px">Color</span>
   </button>
   <button class="mbtn" style="left:38.5px;top:42.4px;width:33px;height:31px;border:1px solid #f2b48f;border-radius:1px;background:#fafafa">
    <svg class="ic" style="left:9.8px;top:3.7px" width="11" height="10" viewBox="0 0 11 10" ><g fill="none" stroke="#666" stroke-width="0.8"><circle cx="6.4" cy="4.2" r="3.6"/><circle cx="3" cy="6.8" r="2.4"/></g></svg>
    <span class="t" style="left:7.71px;top:18px;font-size:8.25px;color:#484848;letter-spacing:-0.37px">Size</span>
   </button>
   <button class="mbtn" style="left:74.5px;top:42.4px;width:32px;height:31px;border:1px solid #f2b48f;border-radius:1px;background:#fafafa">
    <svg class="ic" style="left:9.6px;top:4.9px" width="11" height="9" viewBox="0 0 11 9" ><rect x="0.5" y="0.5" width="9.6" height="7.3" fill="none" stroke="#6a6a6a" stroke-width="0.9"/><text x="5.3" y="6.5" font-family="Liberation Serif, serif" font-size="6.8" fill="#444" text-anchor="middle">T</text></svg>
    <span class="t" style="left:5.41px;top:18px;font-size:8.25px;color:#484848;letter-spacing:-0.29px">Label</span>
   </button>
   <button class="mbtn" style="left:3.5px;top:76.4px;width:32px;height:31px;border:1px solid #f2b48f;border-radius:1px;background:#fafafa">
    <svg class="ic" style="left:9.3px;top:4.2px" width="11" height="9" viewBox="0 0 11 9" ><circle cx="5.5" cy="1.7" r="1.5" fill="#444"/><g fill="none" stroke="#666" stroke-width="0.7"><circle cx="1.9" cy="6.5" r="1.4"/><circle cx="5.5" cy="6.5" r="1.4"/><circle cx="9.1" cy="6.5" r="1.4"/></g></svg>
    <span class="t" style="left:4.71px;top:18px;font-size:8.25px;color:#484848;letter-spacing:-0.16px">Detail</span>
   </button>
   <button class="mbtn" style="left:38.5px;top:76.4px;width:33px;height:31px;border:1px solid #f2b48f;border-radius:1px;background:#fafafa">
    <svg class="ic" style="left:9.8px;top:3.7px" width="11" height="10" viewBox="0 0 11 10" ><path d="M1.5 0.6h8c.600 0 1 .400 1 1v4.3c0 .600-.400 1-1 1H8.3L7.2 9 6.5 6.9H1.5c-.600 0-1-.400-1-1V1.6c0-.600.4-1 1-1z" fill="none" stroke="#555" stroke-width="0.9"/></svg>
    <span class="t" style="left:3.17px;top:18px;font-size:8.25px;color:#484848;letter-spacing:0.06px">Tooltip</span>
   </button>
  </section>
  <section id="columns" class="shelf" style="left:270px;top:0px;width:750px;height:20.2px;border:1px solid #f2b48f;background:#fafafa">
   <div style="left:89px;top:0px;width:1px;height:18.2px;background:#f2b48f">
   </div>
   <span class="t" style="left:15.83px;top:3px;font-size:9.25px;color:#555;letter-spacing:0.05px">Columns</span>
   <svg class="ic" style="left:3.6px;top:5.5px" width="7" height="7" viewBox="0 0 7 7" ><path d="M0.9 0.4v1.2M3.5 0.4v1.2M6.1 0.4v1.2" stroke="#555" stroke-width="1.4"/><path d="M0.9 2.6v4.2M3.5 2.6v4.2M6.1 2.6v4.2" stroke="#555" stroke-width="1.4"/></svg>
   <div class="pill" style="left:91px;top:1.4px;width:109.7px;height:15px;background:#00b180">
    <span class="t" style="left:7.61px;top:3.6px;font-size:9.5px;color:#fff;letter-spacing:-0.05px">SUM(Sales)</span>
   </div>
  </section>
  <section id="rows" class="shelf" style="left:270px;top:23.6px;width:750px;height:20.4px;border:1px solid #f2b48f;background:#fafafa">
   <div style="left:89px;top:0px;width:1px;height:18.4px;background:#f2b48f">
   </div>
   <span class="t" style="left:15.65px;top:3.4px;font-size:9.25px;color:#555;letter-spacing:0.01px">Rows</span>
   <svg class="ic" style="left:3.5px;top:5.6px" width="7" height="7" viewBox="0 0 7 7" ><path d="M0.2 0.8h1.2M0.2 3.4h1.2M0.2 6h1.2" stroke="#555" stroke-width="1.4"/><path d="M2.2 0.8h4.8M2.2 3.4h4.8M2.2 6h4.8" stroke="#555" stroke-width="1.4"/></svg>
   <div class="pill" style="left:91px;top:1.4px;width:109.7px;height:15px;background:#4996b2">
    <svg class="ic" style="left:8.2px;top:4.3px" width="7" height="7" viewBox="0 0 7 7" ><g fill="none" stroke="#fff" stroke-width="0.7" opacity="0.85"><rect x="0.5" y="0.5" width="6" height="6"/><path d="M3.5 1.9v3.2M1.9 3.5h3.2"/></g></svg>
    <span class="t" style="left:18.54px;top:3px;font-size:9.75px;color:#fff;letter-spacing:-0.09px">Sub-Category</span>
    <svg class="ic" style="left:94.5px;top:4.3px" width="8" height="7" viewBox="0 0 8 7" ><path d="M0.2 0.9h7.2M0.2 3.5h4.6M0.2 6.1h2.2" stroke="#fff" stroke-width="1.3"/></svg>
   </div>
  </section>
  <section id="view" style="left:270px;top:47px;width:750px;height:400px;border:1px solid #e3e3e3;background:#fff">
   <span class="t title" style="left:5.96px;top:8px;line-height:20px;font-size:15px;color:#6e6e6e;letter-spacing:0.12px">Sum of sales for each sub-category</span>
   <span class="t" style="left:8.87px;top:33px;color:#4d4d4d;font-weight:700;letter-spacing:-0.13px">Sub-Cat..</span>
   <svg class="ic" style="left:49.2px;top:36.7px" width="7" height="7" viewBox="0 0 7 7" ><path d="M0.2 0.9h6.4M0.2 3.3h4.2M0.2 5.7h2.2" stroke="#555" stroke-width="1.2"/></svg>
   <div id="chart" class="chart" style="left:0px;top:45px;width:748px;height:220px;">
    <span class="t rl" style="left:35.68px;top:1px;color:#8e8e8e;letter-spacing:-0.04px">Phones</span>
    <span class="t rl" style="left:39.83px;top:14px;color:#8e8e8e;letter-spacing:0.07px">Chairs</span>
    <span class="t rl" style="left:32.65px;top:27px;color:#8e8e8e;letter-spacing:0.34px">Storage</span>
    <span class="t rl" style="left:38.54px;top:40px;color:#8e8e8e;letter-spacing:0.33px">Tables</span>
    <span class="t rl" style="left:33.72px;top:52px;color:#8e8e8e;letter-spacing:0.3px">Binders</span>
    <span class="t rl" style="left:26.22px;top:65px;color:#8e8e8e;letter-spacing:0.18px">Machines</span>
    <span class="t rl" style="left:16.49px;top:78px;color:#8e8e8e;letter-spacing:0.1px">Accessories</span>
    <span class="t rl" style="left:34.83px;top:91px;color:#8e8e8e;letter-spacing:0.06px">Copiers</span>
    <span class="t rl" style="left:21.72px;top:104px;color:#8e8e8e;letter-spacing:0.06px">Bookcases</span>
    <span class="t rl" style="left:20.3px;top:116px;color:#8e8e8e;letter-spacing:0.21px">Appliances</span>
    <span class="t rl" style="left:16.38px;top:129px;color:#8e8e8e;letter-spacing:0.31px">Furnishings</span>
    <span class="t rl" style="left:41.69px;top:142px;color:#8e8e8e;letter-spacing:0.16px">Paper</span>
    <span class="t rl" style="left:30.15px;top:155px;color:#8e8e8e;letter-spacing:0.19px">Supplies</span>
    <span class="t rl" style="left:52.79px;top:168px;color:#8e8e8e;letter-spacing:0.85px">Art</span>
    <span class="t rl" style="left:23.22px;top:180px;color:#8e8e8e;letter-spacing:0.12px">Envelopes</span>
    <span class="t rl" style="left:39.22px;top:193px;color:#8e8e8e;letter-spacing:0.06px">Labels</span>
    <span class="t rl" style="left:24.19px;top:206px;color:#8e8e8e;letter-spacing:0.25px">Fasteners</span>
    <svg class="ic" style="left:0px;top:0px" width="748" height="220" viewBox="0 0 748 220" ><rect x="166.33" y="0.5" width="1" height="219.5" fill="#f4f4f4"/><rect x="263.46" y="0.5" width="1" height="219.5" fill="#f4f4f4"/><rect x="360.59" y="0.5" width="1" height="219.5" fill="#f4f4f4"/><rect x="457.72" y="0.5" width="1" height="219.5" fill="#f4f4f4"/><rect x="554.85" y="0.5" width="1" height="219.5" fill="#f4f4f4"/><rect x="651.98" y="0.5" width="1" height="219.5" fill="#f4f4f4"/><rect x="69.7" y="217.5" width="673" height="1" fill="#efefef"/><rect class="bar" x="69.7" y="2.3" width="641.07" height="9.4" fill="#4e79a7"/><rect class="bar" x="69.7" y="15.1" width="638.05" height="9.4" fill="#4e79a7"/><rect class="bar" x="69.7" y="27.9" width="434.84" height="9.4" fill="#4e79a7"/><rect class="bar" x="69.7" y="40.7" width="402.05" height="9.4" fill="#4e79a7"/><rect class="bar" x="69.7" y="53.5" width="395.15" height="9.4" fill="#4e79a7"/><rect class="bar" x="69.7" y="66.3" width="367.62" height="9.4" fill="#4e79a7"/><rect class="bar" x="69.7" y="79.1" width="325.15" height="9.4" fill="#4e79a7"/><rect class="bar" x="69.7" y="91.9" width="290.47" height="9.4" fill="#4e79a7"/><rect class="bar" x="69.7" y="104.7" width="223.17" height="9.4" fill="#4e79a7"/><rect class="bar" x="69.7" y="117.5" width="208.89" height="9.4" fill="#4e79a7"/><rect class="bar" x="69.7" y="130.3" width="178.15" height="9.4" fill="#4e79a7"/><rect class="bar" x="69.7" y="143.1" width="152.45" height="9.4" fill="#4e79a7"/><rect class="bar" x="69.7" y="155.9" width="90.67" height="9.4" fill="#4e79a7"/><rect class="bar" x="69.7" y="168.7" width="52.68" height="9.4" fill="#4e79a7"/><rect class="bar" x="69.7" y="181.5" width="32.01" height="9.4" fill="#4e79a7"/><rect class="bar" x="69.7" y="194.3" width="24.26" height="9.4" fill="#4e79a7"/><rect class="bar" x="69.7" y="207.1" width="5.87" height="9.4" fill="#4e79a7"/></svg>
   </div>
   <div id="axis" class="axis" style="left:0px;top:265px;width:748px;height:34px;">
    <span class="t" style="left:70.79px;top:3px;color:#8a8a8a;letter-spacing:0.41px">$0</span>
    <span class="t" style="left:149.37px;top:3px;color:#8a8a8a;letter-spacing:0.37px">$50,000</span>
    <span class="t" style="left:243.75px;top:3px;color:#8a8a8a;letter-spacing:0.39px">$100,000</span>
    <span class="t" style="left:340.88px;top:3px;color:#8a8a8a;letter-spacing:0.39px">$150,000</span>
    <span class="t" style="left:438.01px;top:3px;color:#8a8a8a;letter-spacing:0.39px">$200,000</span>
    <span class="t" style="left:535.14px;top:3px;color:#8a8a8a;letter-spacing:0.39px">$250,000</span>
    <span class="t" style="left:632.27px;top:3px;color:#8a8a8a;letter-spacing:0.39px">$300,000</span>
    <span class="t" style="left:394.87px;top:20px;color:#4d4d4d;font-weight:700;letter-spacing:-0.13px">Sales</span>
   </div>
  </section>
 </main>
 <div id="dragpill" class="pill ghost" style="left:129px;top:221px;width:111.3px;height:15.2px;background:rgba(73,150,178,0.63);box-shadow:0 1px 1.5px rgba(0,0,0,0.12)">
  <span class="t gt" style="left:7.61px;top:3px;font-size:9.5px;color:#fff;letter-spacing:0.05px">Sub-Category (group)</span>
 </div>
</div>
</body>
</html>
